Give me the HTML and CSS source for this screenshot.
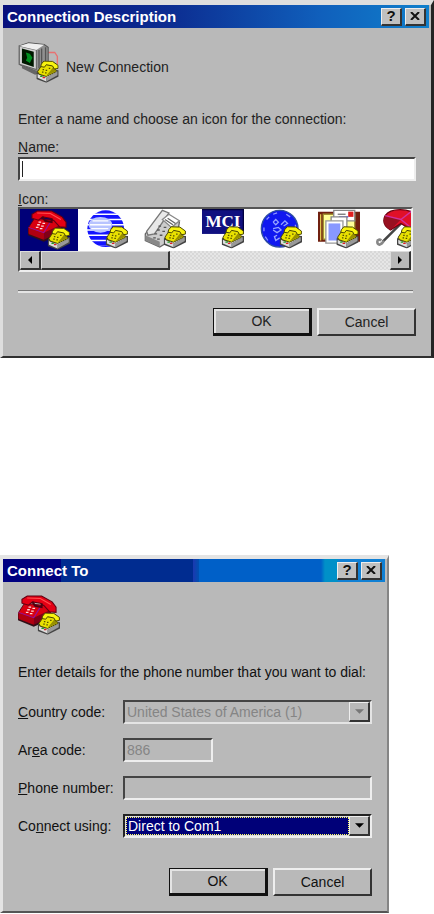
FILE: index.html
```html
<!DOCTYPE html>
<html lang="en">
<head>
<meta charset="utf-8" />
<title>Connection Description</title>
<link rel="stylesheet" href="styles.css">
</head>
<body>
<svg class="defs" aria-hidden="true">
  <symbol id="small-phone" viewBox="0 0 18 18">
    <path d="M0 10 L5 7 L18 8 V13 L8 18 L0 15Z" fill="#444"/>
    <path d="M1 10 L5 8 L17 9 L8 14Z" fill="#f0f0f0"/>
    <path d="M1 11 L8 14 V17 L1 14Z" fill="#ddd"/>
    <path d="M8 14 L17 9 V12 L8 17Z" fill="#999"/>
    <path d="M3 13h2" stroke="#20a020"/>
    <path d="M5 14h2" stroke="#e02020"/>
    <path d="M1 9 L5 3 L14 4 L16 9 L8 13 L2 11Z" fill="#e8e000" stroke="#4a4600" stroke-width=".8"/>
    <path d="M8 12.500 L16 8.500 L14 5Z" fill="#989000"/>
    <path d="M4 3 L6 .6 L13 .8 L17.500 4 V6.500 L14.500 7 L13 4.500 L8 3.500 L6.500 5.500 L3.500 5Z" fill="#f8f410" stroke="#4a4600" stroke-width=".8"/>
    <path d="M5 7.500h1.200M7.500 8h1.200M4.500 9.500h1.200M7 10h1.200M10 6.500h1.200" stroke="#555000"/>
  </symbol>
  <symbol id="red-phone" viewBox="0 0 32 32">
    <path d="M0 15 L12 19 L25 13 V19 L12 25 L0 20Z" fill="#301018"/>
    <path d="M.5 14 L5 7 L22 9 L26 16 L12 23 L.5 18Z" fill="#d80010" stroke="#600010" stroke-width=".7"/>
    <path d="M.5 14 L12 18 V23.500 L.5 19Z" fill="#b00010"/>
    <path d="M12 18 L25 12 V17 L12 23.500Z" fill="#800018"/>
    <path d="M.5 14 L12 18 L17 10" fill="none" stroke="#9010a0" stroke-width=".8"/>
    <path d="M3 7 V4 L7 1.500 L18 1.500 L26 6 L29 10 V14 L24 13.500 L20 9 L17 7 L11 6 L8 8.500Z" fill="#e40014" stroke="#600010" stroke-width=".8"/>
    <path d="M7 3 L17 3.500 L25 8" fill="none" stroke="#ff5050" stroke-width=".8"/>
    <path d="M11 6 L13 9 L18 10 L18 7" fill="none" stroke="#500010" stroke-width="1.500"/>
    <path d="M8 10h2M11 11h2M7 12h2M10 13h2M6 14h2M9 15h2" stroke="#ffd8d8"/>
    <use href="#small-phone" x="15" y="14" width="17" height="17"/>
  </symbol>
  <symbol id="computer" viewBox="0 0 32 32">
    <path d="M22 8 H28 L30 11 V17" fill="none" stroke="#e87070"/>
    <path d="M1 3 L8 .6 L20 2 L23 4 V17 L15 23 L1 17Z" fill="#909090" stroke="#555" stroke-width=".8"/>
    <path d="M1 3 L14 6 V21 L1 17Z" fill="#d0d0d0" stroke="#666" stroke-width=".8"/>
    <path d="M1 3 L8 1 L20 2 L14 6Z" fill="#eee"/>
    <path d="M16 6V20M18 5V19M21 4V18" stroke="#555"/>
    <path d="M3 5 L12 7.500 V19 L3 16Z" fill="#001800"/>
    <path d="M6 8 L9 9 L11 12 L9 16 L6 14 L7 12Z" fill="#009020"/>
    <path d="M3 18 L14 22 L18 20 V23 L13 25 L3 20Z" fill="#666"/>
    <use href="#small-phone" x="14" y="14" width="17" height="17"/>
  </symbol>
  <clipPath id="globe-clip"><circle cx="15" cy="15" r="14"/></clipPath>
  <symbol id="striped-globe" viewBox="0 0 32 32">
    <g clip-path="url(#globe-clip)">
      <rect width="32" height="32" fill="#fff"/>
      <path d="M0 2h32M0 6h32M0 10h32M0 14h32M0 18h32M0 22h32M0 26h32M0 29h32" stroke="#1414ff" stroke-width="2.800"/>
      <ellipse cx="11" cy="12" rx="9" ry="6" fill="#b8c4ff"/>
      <path d="M5 9h12M3 12h16M4 15h13" stroke="#fff"/>
    </g>
    <use href="#small-phone" x="15" y="13" width="17" height="17"/>
  </symbol>
  <symbol id="desk-phone" viewBox="0 0 32 32">
    <path d="M1 19 L15 2 L27 10 L25 21 L12 29 L1 24Z" fill="#ccc" stroke="#666"/>
    <path d="M1 20 L12 25 V29 L1 24Z" fill="#888"/>
    <path d="M2 17 L14 1 L19 3 L8 19 L3 20Z" fill="#e8e8e8" stroke="#777"/>
    <path d="M14 8 L19 4 L27 9 L21 14Z" fill="#fff" stroke="#888"/>
    <path d="M16 8 L22 12M18 7 L24 11" stroke="#666"/>
    <path d="M11 13h2M15 14h2M10 16h2M14 17h2M8 19h2M12 20h2M7 22h2M10 23h2" stroke="#555"/>
    <use href="#small-phone" x="15" y="13" width="17" height="17"/>
  </symbol>
  <symbol id="blue-globe" viewBox="0 0 32 32">
    <circle cx="15" cy="15" r="14" fill="#1018f0" stroke="#3050a0"/>
    <path d="M10 4 L13 3M5 8 L7 6M20 4 L23 6M4 21 L6 24M27 12 V15M3 14 V17" stroke="#9098ff"/>
    <path d="M10 10 L12 8 L14 10 L12 12 L10 10M16 12 L19 9 L21 11 L18 13M10 15 L14 14 L16 16 L13 18 L10 16M13 20 L11 21 L12 24 L15 22M20 15h2" fill="none" stroke="#98a4ff"/>
    <use href="#small-phone" x="15" y="13" width="17" height="17"/>
  </symbol>
  <symbol id="mail-folder" viewBox="0 0 32 32">
    <path d="M0 2 H32 V25 H0Z" fill="#702010"/>
    <path d="M4 4 H28 V23 H4Z" fill="#ffff98" stroke="#a09030"/>
    <path d="M2 4V24" stroke="#e0c850"/>
    <path d="M12 1 H28 V9 H12Z" fill="#fff" stroke="#888"/>
    <rect x="23" y="2" width="4" height="4" fill="#e02020"/>
    <path d="M15 4h6" stroke="#777"/>
    <path d="M16 6h7" stroke="#3040ff"/>
    <path d="M10 6 H22 V20 H10Z" fill="#fff" stroke="#888"/>
    <path d="M6 9 H19 V26 H6Z" fill="#fff" stroke="#999"/>
    <path d="M8 11 H17 V24 H8Z" fill="#8898ff"/>
    <use href="#small-phone" x="14" y="13" width="17" height="17"/>
  </symbol>
  <symbol id="umbrella" viewBox="0 0 32 32">
    <path d="M20 10 L5 25" stroke="#444" stroke-width="2"/>
    <path d="M6 24 C4 28 1 28 1 25 C1 23 3 23 4 24" fill="none" stroke="#888" stroke-width="2"/>
    <path d="M7 5 C11 -1 25 -1 32 5 V19 L19 11 L11 16 C6 13 5 9 7 5Z" fill="#e01028" stroke="#700010"/>
    <path d="M7 5 C5 9 6 13 11 16 L19 8Z" fill="#981020"/>
    <path d="M7 5 L19 8 L28 1M19 8 L29 16" fill="none" stroke="#d030a0"/>
    <use href="#small-phone" x="16" y="13" width="17" height="17"/>
  </symbol>
</svg>

<form class="dialog description">
  <div class="title-bar">
    <h1>Connection Description</h1>
    <button type="button" class="title-button" aria-label="Help">?</button>
    <button type="button" class="title-button" aria-label="Close">
      <svg viewBox="0 0 10 8"><path d="M1 0 L9 8M9 0 L1 8"/></svg>
    </button>
  </div>
  <div class="content">
    <div class="heading">
      <svg class="icon"><use href="#computer"/></svg>
      <span>New Connection</span>
    </div>
    <p>Enter a name and choose an icon for the connection:</p>
    <label class="top-label" for="name"><u>N</u>ame:</label>
    <input type="text" class="field caret" name="name" id="name" />
    <div class="top-label" id="iconLabel"><u>I</u>con:</div>
    <div class="icon-list">
      <div class="icons" role="listbox" aria-labelledby="iconLabel">
        <button type="button" class="choice selected" role="option" aria-selected="true" aria-label="Red phone"><svg class="icon"><use href="#red-phone"/></svg></button>
        <button type="button" class="choice" role="option" aria-label="Striped globe"><svg class="icon"><use href="#striped-globe"/></svg></button>
        <button type="button" class="choice" role="option" aria-label="Desk phone"><svg class="icon"><use href="#desk-phone"/></svg></button>
        <button type="button" class="choice" role="option" aria-label="MCI">
          <svg class="icon" viewBox="0 0 32 32">
            <rect x="0" y="0" width="32" height="19" fill="#101080"/>
            <path d="M0 .5H31.500V19" fill="none" stroke="#000040"/>
            <text x="16" y="14" text-anchor="middle" class="mci-text">MCI</text>
            <use href="#small-phone" x="15" y="13" width="17" height="17"/>
          </svg>
        </button>
        <button type="button" class="choice" role="option" aria-label="Blue globe"><svg class="icon"><use href="#blue-globe"/></svg></button>
        <button type="button" class="choice" role="option" aria-label="Mail folder"><svg class="icon"><use href="#mail-folder"/></svg></button>
        <button type="button" class="choice" role="option" aria-label="Umbrella"><svg class="icon"><use href="#umbrella"/></svg></button>
      </div>
      <div class="scrollbar">
        <button type="button" class="scroll-button" aria-label="Scroll left"><svg viewBox="0 0 6 8"><path d="M5 0V8L1 4Z"/></svg></button>
        <div class="thumb"></div>
        <button type="button" class="scroll-button right" aria-label="Scroll right"><svg viewBox="0 0 6 8"><path d="M1 0V8L5 4Z"/></svg></button>
      </div>
    </div>
    <hr />
    <div class="buttons">
      <button type="submit" class="push default">OK</button>
      <button type="button" class="push">Cancel</button>
    </div>
  </div>
</form>

<form class="dialog connect">
  <div class="title-bar">
    <h1>Connect To</h1>
    <button type="button" class="title-button" aria-label="Help">?</button>
    <button type="button" class="title-button" aria-label="Close">
      <svg viewBox="0 0 10 8"><path d="M1 0 L9 8M9 0 L1 8"/></svg>
    </button>
  </div>
  <div class="content">
    <div class="heading">
      <svg class="icon"><use href="#red-phone"/></svg>
    </div>
    <p>Enter details for the phone number that you want to dial:</p>
    <div class="rows">
      <label for="country"><u>C</u>ountry code:</label>
      <div class="combo disabled">
        <select name="country" id="country" disabled>
          <option>United States of America (1)</option>
        </select>
        <span class="arrow"><svg viewBox="0 0 8 4"><path d="M0 0H8L4 4Z"/></svg></span>
      </div>
      <label for="area">Ar<u>e</u>a code:</label>
      <input type="text" class="field area" name="area" id="area" value="886" disabled />
      <label for="phone"><u>P</u>hone number:</label>
      <input type="text" class="field" name="phone" id="phone" disabled />
      <label for="using">Co<u>n</u>nect using:</label>
      <div class="combo active">
        <select name="using" id="using">
          <option>Direct to Com1</option>
        </select>
        <span class="arrow"><svg viewBox="0 0 8 4"><path d="M0 0H8L4 4Z"/></svg></span>
      </div>
    </div>
    <div class="buttons">
      <button type="submit" class="push default">OK</button>
      <button type="button" class="push">Cancel</button>
    </div>
  </div>
</form>
</body>
</html>
```
FILE: styles.css
```css
* {
  box-sizing: border-box;
}

body {
  margin: 0;
  background-color: #fff;
  color: #222;
  font-family: "Liberation Sans", Arial, sans-serif;
  font-size: 14px;
  line-height: 16px;
}

button,
input,
select {
  font: inherit;
  color: inherit;
  margin: 0;
  padding: 0;
  border-radius: 0;
}

.defs {
  display: block;
  width: 0;
  height: 0;
}

.dialog {
  background-color: #b9b9b9;
}

.description {
  max-width: 434px;
  border: solid;
  border-width: 5px 3px 2px 3px;
  border-color: #dedede #242424 #303030 #dedede;
}

.connect {
  max-width: 389px;
  margin-top: 197px;
  border: solid;
  border-width: 4px 2px 2px 3px;
  border-color: #e4e4e4 #858585 #555 #e4e4e4;
  color: #111;
}

.title-bar {
  display: flex;
  align-items: center;
  gap: 3px;
  height: 23px;
  margin-right: 2px;
  padding: 0 3px 0 4px;
  background: linear-gradient(to right, #08107c, #0c2e92 40%, #1060bc 75%, #1080cc);
}

.connect .title-bar {
  background: linear-gradient(to right, #000080 58px, #002c90 58px, #002c90 190px, #1c38b0 190px, #0050b0 196px, #0060c8 196px, #0060c8 318px, #0090c8 322px, #0090c8 335px, #1080d4 335px);
}

h1 {
  flex: 1;
  margin: 0;
  color: #fff;
  font-size: 15px;
  line-height: 20px;
}

.title-button {
  display: flex;
  align-items: center;
  justify-content: center;
  width: 21px;
  height: 18px;
  background-color: #c0c0c0;
  border: solid;
  border-width: 1px 2px 2px 1px;
  border-color: #eee #333 #333 #eee;
  color: #111;
  font-size: 15px;
  font-weight: bold;
}

.title-button svg {
  width: 10px;
  height: 8px;
}

.title-button path {
  stroke: #111;
  stroke-width: 2;
}

.content {
  padding: 14px 15px 20px;
}

.heading {
  display: flex;
  align-items: center;
  gap: 6px;
}

.heading span {
  padding-top: 8px;
}

.icon {
  display: block;
  flex: none;
  width: 42px;
  height: 42px;
}

.mci-text {
  fill: #fff;
  font: bold 13px "Liberation Serif", serif;
}

p {
  margin: 27px 0 0;
}

.top-label {
  display: block;
  margin-top: 12px;
}

.field {
  display: block;
  width: 100%;
  height: 24px;
  padding: 0 2px;
  background-color: #fff;
  border: 2px solid;
  border-color: #444 #eee #eee #444;
  outline: none;
}

.field:disabled {
  background-color: #b9b9b9;
  color: #858585;
}

.caret {
  background: linear-gradient(#222, #222) 2px 2px / 1px 16px no-repeat #fff;
}

.description .top-label + .field {
  margin-top: 2px;
}

.description .field + .top-label {
  margin-top: 10px;
}

.icon-list {
  margin-right: 3px;
  background-color: #fff;
  border: 2px solid;
  border-color: #555 #eee #eee #555;
}

.icons {
  display: flex;
  overflow: hidden;
}

.choice {
  display: flex;
  flex: none;
  justify-content: center;
  width: 58px;
  height: 42px;
  background-color: #fff;
  border: none;
}

.choice.selected {
  background-color: #000078;
}

.scrollbar {
  display: flex;
  height: 19px;
  background: repeating-conic-gradient(#d8d8d8 0 25%, #e6e6e6 0 50%) 0 0 / 4px 4px;
}

.scroll-button,
.thumb {
  background-color: #b9b9b9;
  border: solid;
  border-width: 1px 2px 2px 1px;
  border-color: #ddd #333 #333 #ddd;
}

.scroll-button {
  display: flex;
  align-items: center;
  justify-content: center;
  width: 21px;
}

.scroll-button svg {
  width: 6px;
  height: 8px;
}

.scroll-button.right {
  margin-left: auto;
}

.thumb {
  width: 33%;
}

hr {
  height: 3px;
  margin: 18px 3px 15px 0;
  border: solid;
  border-width: 1px 0 2px;
  border-color: #777 transparent #e4e4e4;
}

.buttons {
  display: flex;
  justify-content: flex-end;
  gap: 5px;
}

.push {
  width: 99px;
  height: 28px;
  background-color: #b9b9b9;
  border: 2px solid;
  border-color: #eee #333 #333 #eee;
}

.push.default {
  border-color: #111;
  border-width: 1px 3px 3px 1px;
  box-shadow: inset 2px 2px #e4e4e4;
}

.connect .content {
  padding: 12px 15px 15px;
}

.connect p {
  margin-top: 28px;
}

.rows {
  display: grid;
  grid-template-columns: 105px 1fr;
  gap: 14px 0;
  align-items: center;
  margin: 20px 0 30px;
}

.area {
  width: 90px;
}

.combo {
  position: relative;
  height: 24px;
  padding: 1px 21px 1px 1px;
  border: 2px solid;
  border-color: #222 #eee #eee #222;
}

.combo select {
  display: block;
  width: 100%;
  height: 18px;
  padding: 0 1px;
  appearance: none;
  background-color: #b9b9b9;
  border: none;
  opacity: 1;
}

.combo.disabled {
  border-color: #444 #e4e4e4 #e4e4e4 #444;
}

.combo.disabled select {
  color: #858585;
}

.combo.active {
  background-color: #ddd;
}

.combo.active select {
  background-color: #000078;
  border: 1px dotted #ffff60;
  color: #fff;
}

.arrow {
  position: absolute;
  top: 0;
  right: 0;
  display: flex;
  align-items: center;
  justify-content: center;
  width: 21px;
  height: 20px;
  background-color: #b9b9b9;
  border: solid;
  border-width: 1px 2px 2px 1px;
  border-color: #eee #333 #333 #eee;
  pointer-events: none;
}

.arrow svg {
  width: 9px;
  height: 5px;
}

.disabled .arrow path {
  fill: #777;
}
```
